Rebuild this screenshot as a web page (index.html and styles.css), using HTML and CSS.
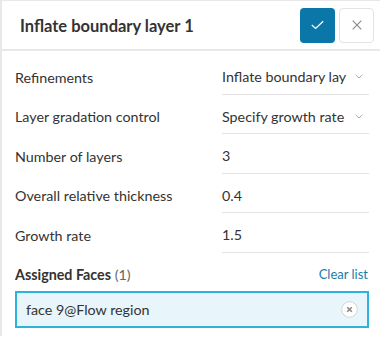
FILE: index.html
```html
<!DOCTYPE html>
<html>
<head>
<meta charset="utf-8">
<link rel="stylesheet" href="styles.css">
</head>
<body>
<div class="panel">
  <div class="header">
    <div class="title">Inflate boundary layer 1</div>
    <div class="actions">
      <button class="btn btn-ok" aria-label="Confirm">
        <svg width="13" height="10" viewBox="0 0 13 10"><path d="M0.8 5 L4.6 8.4 L12.2 1.2" fill="none" stroke="#fff" stroke-width="1.3"/></svg>
      </button>
      <button class="btn btn-cancel" aria-label="Close">
        <svg width="10" height="10" viewBox="0 0 10 10"><path d="M0.7 0.7 L9.3 9.3 M9.3 0.7 L0.7 9.3" fill="none" stroke="#888" stroke-width="1.1"/></svg>
      </button>
    </div>
  </div>
  <div class="content">
    <div class="row">
      <div class="label">Refinements</div>
      <div class="field select"><span class="val">Inflate boundary lay</span>
        <svg class="chev" width="8" height="5" viewBox="0 0 8 5"><path d="M0.6 0.8 L4 4 L7.4 0.8" fill="none" stroke="#aaa" stroke-width="1"/></svg></div>
    </div>
    <div class="row">
      <div class="label">Layer gradation control</div>
      <div class="field select"><span class="val">Specify growth rate</span>
        <svg class="chev" width="8" height="5" viewBox="0 0 8 5"><path d="M0.6 0.8 L4 4 L7.4 0.8" fill="none" stroke="#aaa" stroke-width="1"/></svg></div>
    </div>
    <div class="row">
      <div class="label">Number of layers</div>
      <div class="field"><span class="val">3</span></div>
    </div>
    <div class="row">
      <div class="label">Overall relative thickness</div>
      <div class="field"><span class="val">0.4</span></div>
    </div>
    <div class="row">
      <div class="label">Growth rate</div>
      <div class="field"><span class="val">1.5</span></div>
    </div>
    <div class="assigned">
      <div class="assigned-title"><b>Assigned Faces</b> <span class="count">(1)</span></div>
      <a class="clear">Clear list</a>
    </div>
    <div class="facebox">
      <span>face 9@Flow region</span>
      <span class="remove">
        <svg width="17" height="17" viewBox="0 0 17 17"><circle cx="8.5" cy="8.5" r="7.8" fill="#fff" stroke="#d3d3d3" stroke-width="1"/><path d="M6.2 6.2 L10.8 10.8 M10.8 6.2 L6.2 10.8" stroke="#888" stroke-width="1.6"/></svg>
      </span>
    </div>
  </div>
</div>
</body>
</html>
```
FILE: styles.css
```css
html, body {
  margin: 0;
  padding: 0;
  background: #fff;
}
body {
  font-family: Lato, "Open Sans", sans-serif;
  color: #333;
  width: 380px;
  height: 337px;
  overflow: hidden;
}
.panel {
  border-left: 2px solid #e8e8e8;
  border-top: 1px solid #e8e8e8;
  height: 336px;
  box-sizing: border-box;
}
.header {
  display: flex;
  align-items: center;
  justify-content: space-between;
  height: 48px;
  padding: 0 6px 0 18px;
  border-bottom: 2px solid #e8e8e8;
}
.title {
  font-size: 16.5px;
  font-weight: 700;
  color: #333;
  padding-top: 1px;
}
.actions {
  display: flex;
  gap: 4px;
}
.btn {
  width: 35px;
  height: 35px;
  border-radius: 4px;
  padding: 0;
  display: flex;
  align-items: center;
  justify-content: center;
  box-sizing: border-box;
}
.btn-ok {
  background: #0b76a8;
  border: none;
}
.btn-cancel {
  background: #fff;
  border: 1px solid #e3e3e3;
}
.content {
  padding: 4px 11px 0 13px;
}
.row {
  display: grid;
  grid-template-columns: 207px 1fr;
  height: 39.5px;
  align-items: stretch;
}
.label, .field {
  font-size: 14.3px;
  display: flex;
  align-items: center;
  padding-top: 5px;
  box-sizing: border-box;
}
.field {
  border-bottom: 1px solid #e3e3e3;
  justify-content: space-between;
}
.chev {
  margin-right: 6px;
}
.assigned {
  display: flex;
  justify-content: space-between;
  align-items: center;
  margin-top: 13px;
  font-size: 14.3px;
}
.assigned-title b {
  font-weight: 700;
}
.count {
  color: #666;
}
.clear {
  color: #1a7ca9;
  font-size: 13px;
  margin-right: 1px;
}
.facebox {
  margin-top: 8px;
  height: 37px;
  box-sizing: border-box;
  border: 2px solid #2bb3dd;
  background: #e8f5fb;
  display: flex;
  align-items: center;
  justify-content: space-between;
  padding: 0 9px 0 9px;
  font-size: 14.3px;
}
.remove {
  display: flex;
}
```
